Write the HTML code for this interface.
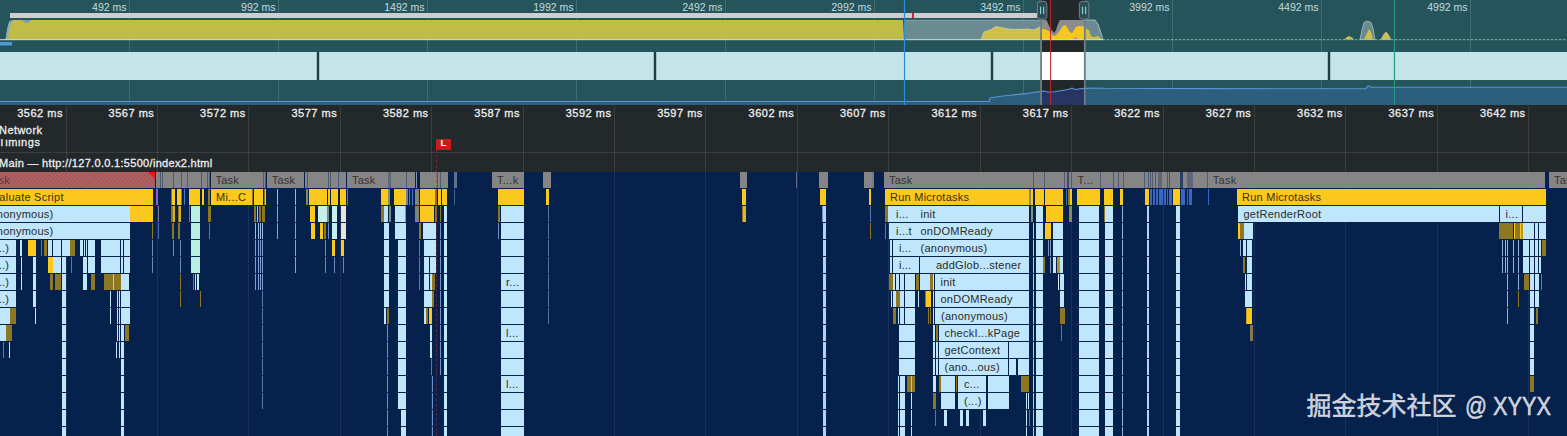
<!DOCTYPE html>
<html><head><meta charset="utf-8"><title>Performance</title>
<style>
html,body{margin:0;padding:0;background:#23282a;}
body{width:1567px;height:436px;position:relative;overflow:hidden;font-family:"Liberation Sans","Noto Sans CJK SC",sans-serif;font-size:11px;}
#ovw{position:absolute;left:0;top:0;width:1567px;height:105px;background:#25545b;overflow:hidden;}
.ov{position:absolute;left:0;top:0;}
.ol{position:absolute;top:1px;width:60px;text-align:right;color:#c4dcdf;font-size:10.5px;line-height:13px;white-space:nowrap;}
#mid{position:absolute;left:0;top:105px;width:1567px;height:67px;background:#23282a;}
.rl{position:absolute;top:107px;width:70px;text-align:right;color:#eceeef;font-size:11px;line-height:13px;white-space:nowrap;letter-spacing:0.5px;-webkit-text-stroke:0.3px #eceeef;}
.g{position:absolute;top:106px;width:1px;height:330px;background:linear-gradient(to bottom,rgba(255,255,255,0.10) 0 66px,rgba(200,215,255,0.09) 66px 330px);}
.tl{position:absolute;left:0;color:#eceeef;font-size:11px;line-height:13px;white-space:nowrap;letter-spacing:0.25px;-webkit-text-stroke:0.3px #eceeef;}
#flame{position:absolute;left:0;top:172px;width:1567px;height:264px;background:#07214d;}
.b{position:absolute;height:16px;overflow:hidden;}
.b span{position:absolute;top:1px;line-height:14px;font-size:11px;white-space:nowrap;letter-spacing:0.25px;}
#wm{position:absolute;left:1306.5px;top:389px;font-size:25px;line-height:34px;color:rgba(235,238,242,0.86);white-space:nowrap;-webkit-text-stroke:0.45px rgba(235,238,242,0.86);}
#wm2{position:absolute;left:1465px;top:388.5px;font-size:25px;line-height:34px;color:rgba(235,238,242,0.86);white-space:nowrap;transform:scaleX(0.868);transform-origin:0 0;-webkit-text-stroke:0.5px rgba(235,238,242,0.86);}
</style></head><body>
<div id="ovw"><svg class="ov" width="1567" height="105" viewBox="0 0 1567 105"><line x1="129.5" y1="0" x2="129.5" y2="103" stroke="#3f6d74" stroke-width="1"/><line x1="278.5" y1="0" x2="278.5" y2="103" stroke="#3f6d74" stroke-width="1"/><line x1="427.5" y1="0" x2="427.5" y2="103" stroke="#3f6d74" stroke-width="1"/><line x1="576.5" y1="0" x2="576.5" y2="103" stroke="#3f6d74" stroke-width="1"/><line x1="725.5" y1="0" x2="725.5" y2="103" stroke="#3f6d74" stroke-width="1"/><line x1="874.5" y1="0" x2="874.5" y2="103" stroke="#3f6d74" stroke-width="1"/><line x1="1023.5" y1="0" x2="1023.5" y2="103" stroke="#3f6d74" stroke-width="1"/><line x1="1172.5" y1="0" x2="1172.5" y2="103" stroke="#3f6d74" stroke-width="1"/><line x1="1321.5" y1="0" x2="1321.5" y2="103" stroke="#3f6d74" stroke-width="1"/><line x1="1470.5" y1="0" x2="1470.5" y2="103" stroke="#3f6d74" stroke-width="1"/><line x1="1619.5" y1="0" x2="1619.5" y2="103" stroke="#3f6d74" stroke-width="1"/><rect x="10" y="13" width="1027" height="5" fill="#cfcdd2"/><rect x="912" y="13" width="2" height="5" fill="#d6242c"/><path d="M3,39.5 L5.5,39 L7,30 L9,22 L11,20.5 L14,20 L903,20 L904,39.5 Z" fill="#c1bc48"/><path d="M6,39 L7.5,28 L9.5,21.5 L14,20 L11,23 L9,30 L8,39 Z" fill="#7fb0c8"/><path d="M22,20 L24,22 L27,23 L30,21 L31,20 Z" fill="#6f9fb6"/><rect x="905" y="20" width="136" height="19.5" fill="#6a8b90"/><path d="M905,20.3 L1041,20.3" stroke="#8fa9ad" stroke-width="0.8"/><path d="M981,39.5 L984,32 L990,30 L996,26.5 L1000,27.5 L1008,29 L1018,29.5 L1028,29 L1034,30 L1041,26.5 L1041,39.5 Z" fill="#cdc044"/><path d="M981,39.5 L984,32 L990,30 L996,26.5 L1000,27.5 L1008,29 L1018,29.5 L1028,29 L1034,30 L1041,26.5" fill="none" stroke="#d9d9c0" stroke-width="0.7"/><rect x="1042" y="0" width="43" height="105" fill="#222829"/><path d="M1042,20 L1046.5,20 L1049.6,27 L1052,30.5 L1054.3,33 L1056,30 L1057.5,25.5 L1059.4,20.6 L1061,20 L1085,20 L1085,39.5 L1042,39.5 Z" fill="#8c8c8c"/><path d="M1042,29 L1045,29.5 L1049,31 L1053,35.5 L1055,36 L1058,33 L1061,29 L1063,26 L1065,25 L1067,27 L1069,31 L1072,33.5 L1074,30 L1076,27 L1079,26 L1085,26.5 L1085,39.5 L1042,39.5 Z" fill="#f6c71c"/><path d="M1073,39.5 L1075.5,37 L1078,39.5 Z" fill="#c070e0"/><path d="M1085,20 L1095,20 L1098,24 L1100,30 L1103,39.5 L1085,39.5 Z" fill="#6a8b90"/><path d="M1085,20 L1095,20 L1098,24 L1100,30 L1103,39.5" fill="none" stroke="#b8c8ca" stroke-width="0.8"/><path d="M1085,28 L1089,30 L1091,36 L1094,37 L1098,36 L1102,39.5 L1085,39.5 Z" fill="#cdc044"/><path d="M1344,39.5 L1347,37 L1349,36 L1352,37.5 L1354,39.5 Z" fill="#cdc044"/><path d="M1360,39.5 L1362,30 L1364,22.5 L1367,21 L1371,22.5 L1373,28 L1375,39.5 Z" fill="#6a8b90" stroke="#b8c8ca" stroke-width="0.7"/><path d="M1364,39.5 L1367,33 L1369,29 L1371,32 L1373,39.5 Z" fill="#cdc044"/><path d="M1381,39.5 L1384,34 L1386,32 L1388,34 L1391,39.5 Z" fill="#cdc044" stroke="#b8c8ca" stroke-width="0.6"/><path d="M0,39.7 L1103,39.7" stroke="#e6ecec" stroke-width="0.9"/><path d="M1103,39.7 L1567,39.7" stroke="#b4c6c8" stroke-width="0.8" stroke-dasharray="2.5 1.5"/><rect x="0" y="42" width="12" height="3.5" fill="#4b9ad6"/><rect x="0" y="52" width="1567" height="28" fill="#c5e4e9"/><rect x="316.8" y="52" width="2.4" height="28" fill="#1f3d42"/><rect x="653.8" y="52" width="2.4" height="28" fill="#1f3d42"/><rect x="990.8" y="52" width="2.4" height="28" fill="#1f3d42"/><rect x="1327.8" y="52" width="2.4" height="28" fill="#1f3d42"/><rect x="1042" y="52" width="43" height="28" fill="#ffffff"/><path d="M0,101.5 L989,101.5 L990,98 L996,97 L1003,96 L1010,95.2 L1018,94.4 L1026,93.6 L1034,92.5 L1040,91.6 L1044,91 L1048,92 L1055,91.8 L1062,90.5 L1068,89.5 L1072,88 L1075,89.5 L1078,89 L1082,88.6 L1086,88.4 L1095,88 L1105,88.3 L1200,88.6 L1366,88.8 L1367,86.5 L1369,85.8 L1371,87.2 L1567,87.2 L1567,105 L0,105 Z" fill="#2d5e7b"/><path d="M1042,91.3 L1044,91 L1048,92 L1055,91.8 L1062,90.5 L1068,89.5 L1072,88 L1075,89.5 L1078,89 L1082,88.6 L1085,88.4 L1085,105 L1042,105 Z" fill="#2a3462"/><path d="M0,101.5 L989,101.5 L990,98 L996,97 L1003,96 L1010,95.2 L1018,94.4 L1026,93.6 L1034,92.5 L1040,91.6 L1044,91 L1048,92 L1055,91.8 L1062,90.5 L1068,89.5 L1072,88 L1075,89.5 L1078,89 L1082,88.6 L1086,88.4 L1095,88 L1105,88.3 L1200,88.6 L1366,88.8 L1367,86.5 L1369,85.8 L1371,87.2 L1567,87.2" fill="none" stroke="#5796d6" stroke-width="1.1"/><line x1="904.5" y1="0" x2="904.5" y2="105" stroke="#2a8ee0" stroke-width="1.2"/><line x1="1394.5" y1="0" x2="1394.5" y2="105" stroke="#1f9b80" stroke-width="1.2"/><line x1="1050.6" y1="0" x2="1050.6" y2="105" stroke="#c8222a" stroke-width="1"/><rect x="1040.2" y="19" width="1.8" height="86" fill="#6c7e83"/><rect x="1083.9" y="19" width="1.8" height="86" fill="#6c7e83"/><rect x="1037.4" y="1.4" width="9.4" height="17.8" rx="2.8" fill="#2f4c54" stroke="#748c90" stroke-width="0.9"/><rect x="1040" y="6.7" width="1.1" height="7.4" fill="#86d8dc"/><rect x="1043.1" y="6.7" width="1.1" height="7.4" fill="#86d8dc"/><rect x="1079.4" y="1.4" width="9.4" height="17.8" rx="2.8" fill="#2f4c54" stroke="#748c90" stroke-width="0.9"/><rect x="1082" y="6.7" width="1.1" height="7.4" fill="#86d8dc"/><rect x="1085.1" y="6.7" width="1.1" height="7.4" fill="#86d8dc"/></svg><div class="ol" style="left:66.5px">492 ms</div><div class="ol" style="left:215.5px">992 ms</div><div class="ol" style="left:364.5px">1492 ms</div><div class="ol" style="left:513.5px">1992 ms</div><div class="ol" style="left:662.5px">2492 ms</div><div class="ol" style="left:811.5px">2992 ms</div><div class="ol" style="left:960.5px">3492 ms</div><div class="ol" style="left:1109.5px">3992 ms</div><div class="ol" style="left:1258.5px">4492 ms</div><div class="ol" style="left:1407.5px">4992 ms</div></div>
<div id="mid"></div>
<div id="flame"></div>
<div class="rl" style="left:-7.1px">3562 ms</div><div class="rl" style="left:84.32px">3567 ms</div><div class="rl" style="left:175.74px">3572 ms</div><div class="rl" style="left:267.16px">3577 ms</div><div class="rl" style="left:358.58px">3582 ms</div><div class="rl" style="left:450px">3587 ms</div><div class="rl" style="left:541.42px">3592 ms</div><div class="rl" style="left:632.84px">3597 ms</div><div class="rl" style="left:724.26px">3602 ms</div><div class="rl" style="left:815.68px">3607 ms</div><div class="rl" style="left:907.1px">3612 ms</div><div class="rl" style="left:998.52px">3617 ms</div><div class="rl" style="left:1089.94px">3622 ms</div><div class="rl" style="left:1181.36px">3627 ms</div><div class="rl" style="left:1272.78px">3632 ms</div><div class="rl" style="left:1364.2px">3637 ms</div><div class="rl" style="left:1455.62px">3642 ms</div>
<div class="tl" style="top:124px;left:-1px;letter-spacing:0.45px">Network</div>
<div class="tl" style="top:139.4px;left:-1.5px;height:10px;overflow:hidden;letter-spacing:0.55px"><span style="position:relative;top:-3.6px">Timings</span></div>
<div style="position:absolute;left:0;top:152px;width:1567px;height:1px;background:rgba(255,255,255,0.10)"></div>
<div class="tl" style="top:157.4px;left:-1px;letter-spacing:0.31px">Main — http://127.0.0.1:5500/index2.html</div>
<div class="g" style="left:66px"></div><div class="g" style="left:157px"></div><div class="g" style="left:248px"></div><div class="g" style="left:340px"></div><div class="g" style="left:431px"></div><div class="g" style="left:523px"></div><div class="g" style="left:614px"></div><div class="g" style="left:705px"></div><div class="g" style="left:797px"></div><div class="g" style="left:888px"></div><div class="g" style="left:980px"></div><div class="g" style="left:1071px"></div><div class="g" style="left:1163px"></div><div class="g" style="left:1254px"></div><div class="g" style="left:1345px"></div><div class="g" style="left:1437px"></div><div class="g" style="left:1528px"></div>
<div class="b" style="left:0;top:172px;width:155px;background:repeating-linear-gradient(135deg,#b84d52 0 1.4px,#9b6e6e 1.4px 2.8px);"><span style="left:-13.5px;color:#65343a">Task</span></div>
<div style="position:absolute;left:148px;top:172px;width:0;height:0;border-left:7px solid transparent;border-top:7px solid #f0101a"></div>
<div class="b" style="left:156px;top:172px;width:54.3px;background:#858585;"></div>
<div class="b" style="left:159.7px;top:172px;width:1.1px;background:#4f5a74;"></div>
<div class="b" style="left:162.3px;top:172px;width:1.1px;background:#4f5a74;"></div>
<div class="b" style="left:173.4px;top:172px;width:1.1px;background:#4f5a74;"></div>
<div class="b" style="left:180.9px;top:172px;width:1.1px;background:#4f5a74;"></div>
<div class="b" style="left:186.8px;top:172px;width:1.1px;background:#4f5a74;"></div>
<div class="b" style="left:200.7px;top:172px;width:1.1px;background:#4f5a74;"></div>
<div class="b" style="left:207px;top:172px;width:1.1px;background:#4f5a74;"></div>
<div class="b" style="left:209.1px;top:172px;width:1.1px;background:#4f5a74;"></div>
<div class="b" style="left:253.3px;top:172px;width:12.7px;background:#858585;"></div>
<div class="b" style="left:262.5px;top:172px;width:1.1px;background:#4f5a74;"></div>
<div class="b" style="left:265.2px;top:172px;width:1.1px;background:#4f5a74;"></div>
<div class="b" style="left:305.2px;top:172px;width:40.8px;background:#858585;"></div>
<div class="b" style="left:307.3px;top:172px;width:1.1px;background:#4f5a74;"></div>
<div class="b" style="left:327.8px;top:172px;width:1.1px;background:#4f5a74;"></div>
<div class="b" style="left:330.2px;top:172px;width:1.1px;background:#4f5a74;"></div>
<div class="b" style="left:337.5px;top:172px;width:1.1px;background:#4f5a74;"></div>
<div class="b" style="left:388px;top:172px;width:26.8px;background:#858585;"></div>
<div class="b" style="left:388.7px;top:172px;width:1.1px;background:#4f5a74;"></div>
<div class="b" style="left:406px;top:172px;width:1.1px;background:#4f5a74;"></div>
<div class="b" style="left:388px;top:172px;width:2.5px;background:#5f687a;"></div>
<div class="b" style="left:416px;top:172px;width:1px;background:#7f93b0;"></div>
<div class="b" style="left:419.8px;top:172px;width:28px;background:#858585;"></div>
<div class="b" style="left:436.5px;top:172px;width:1.1px;background:#4f5a74;"></div>
<div class="b" style="left:440.1px;top:172px;width:1.1px;background:#4f5a74;"></div>
<div class="b" style="left:543px;top:172px;width:8px;background:#858585;"></div>
<div class="b" style="left:740px;top:172px;width:7px;background:#858585;"></div>
<div class="b" style="left:819px;top:172px;width:9px;background:#858585;"></div>
<div class="b" style="left:864px;top:172px;width:8px;background:#858585;"></div>
<div class="b" style="left:1029.5px;top:172px;width:43px;background:#858585;"></div>
<div class="b" style="left:1029.1px;top:172px;width:1.1px;background:#4f5a74;"></div>
<div class="b" style="left:1033.1px;top:172px;width:1.1px;background:#4f5a74;"></div>
<div class="b" style="left:1043.8px;top:172px;width:1.1px;background:#4f5a74;"></div>
<div class="b" style="left:1063.8px;top:172px;width:1.1px;background:#4f5a74;"></div>
<div class="b" style="left:1071.4px;top:172px;width:1.1px;background:#4f5a74;"></div>
<div class="b" style="left:1067.3px;top:172px;width:2px;background:#3d4a68;"></div>
<div class="b" style="left:1100px;top:172px;width:107.4px;background:#858585;"></div>
<div class="b" style="left:1099.7px;top:172px;width:1.1px;background:#4f5a74;"></div>
<div class="b" style="left:1112.8px;top:172px;width:1.1px;background:#4f5a74;"></div>
<div class="b" style="left:1118.1px;top:172px;width:1.1px;background:#4f5a74;"></div>
<div class="b" style="left:1123.1px;top:172px;width:1.1px;background:#4f5a74;"></div>
<div class="b" style="left:1144.1px;top:172px;width:1.1px;background:#4f5a74;"></div>
<div class="b" style="left:1147.5px;top:172px;width:1.1px;background:#4f5a74;"></div>
<div class="b" style="left:1149.5px;top:172px;width:1.1px;background:#4f5a74;"></div>
<div class="b" style="left:1151.5px;top:172px;width:1.1px;background:#4f5a74;"></div>
<div class="b" style="left:1155.1px;top:172px;width:1.1px;background:#4f5a74;"></div>
<div class="b" style="left:1166.8px;top:172px;width:1.1px;background:#4f5a74;"></div>
<div class="b" style="left:1206.8px;top:172px;width:1.1px;background:#4f5a74;"></div>
<div class="b" style="left:1158.3px;top:172px;width:4.2px;background:#5e6679;"></div>
<div class="b" style="left:1169.3px;top:172px;width:1.1px;background:#3b5696;"></div>
<div class="b" style="left:1179.6px;top:172px;width:3.8px;background:#2c3f6a;"></div>
<div class="b" style="left:1187.2px;top:172px;width:5.5px;background:#5e6679;"></div>
<div class="b" style="left:454px;top:172px;width:2.6px;background:#5d7090;"></div>
<div class="b" style="left:872px;top:172px;width:2px;background:#767b86;"></div>
<div class="b" style="left:796px;top:172px;width:1px;background:#5d6a80;"></div>
<div class="b" style="left:210.5px;top:172px;width:42px;background:#858585;"><span style="left:5px;color:#333">Task</span></div>
<div class="b" style="left:266.7px;top:172px;width:37.7px;background:#858585;"><span style="left:5px;color:#333">Task</span></div>
<div class="b" style="left:347px;top:172px;width:41px;background:#858585;"><span style="left:5px;color:#333">Task</span></div>
<div class="b" style="left:492px;top:172px;width:32px;background:#858585;"><span style="left:5px;color:#333">T...k</span></div>
<div class="b" style="left:884px;top:172px;width:145.5px;background:#858585;"><span style="left:5px;color:#333">Task</span></div>
<div class="b" style="left:1072.5px;top:172px;width:27.5px;background:#858585;"><span style="left:5px;color:#333">T...</span></div>
<div class="b" style="left:1207.8px;top:172px;width:337.2px;background:#858585;"><span style="left:5px;color:#333">Task</span></div>
<div class="b" style="left:1549px;top:172px;width:18px;background:#858585;"><span style="left:5px;color:#333">Task</span></div>
<div class="b" style="left:0px;top:189px;width:153px;background:#fbc91d;"><span style="left:-14px;color:#3a2f00">Evaluate Script</span></div>
<div class="b" style="left:156px;top:189px;width:2px;background:#8a63d2;"></div>
<div class="b" style="left:172px;top:189px;width:2.6px;background:#fbc91d;"></div>
<div class="b" style="left:177px;top:189px;width:4.3px;background:#fbc91d;"></div>
<div class="b" style="left:188.8px;top:189px;width:11.2px;background:#fbc91d;"></div>
<div class="b" style="left:253.9px;top:189px;width:8.7px;background:#fbc91d;"></div>
<div class="b" style="left:309px;top:189px;width:17.6px;background:#fbc91d;"></div>
<div class="b" style="left:328.3px;top:189px;width:1.7px;background:#fbc91d;"></div>
<div class="b" style="left:331px;top:189px;width:6.6px;background:#fbc91d;"></div>
<div class="b" style="left:340.4px;top:189px;width:5.2px;background:#fbc91d;"></div>
<div class="b" style="left:381px;top:189px;width:7.4px;background:#fbc91d;"></div>
<div class="b" style="left:394px;top:189px;width:12px;background:#fbc91d;"></div>
<div class="b" style="left:419.8px;top:189px;width:15.4px;background:#fbc91d;"></div>
<div class="b" style="left:438px;top:189px;width:2.5px;background:#fbc91d;"></div>
<div class="b" style="left:442.4px;top:189px;width:4.9px;background:#fbc91d;"></div>
<div class="b" style="left:498px;top:189px;width:26px;background:#fbc91d;"></div>
<div class="b" style="left:546px;top:189px;width:3px;background:#fbc91d;"></div>
<div class="b" style="left:742px;top:189px;width:4px;background:#fbc91d;"></div>
<div class="b" style="left:820px;top:189px;width:6px;background:#fbc91d;"></div>
<div class="b" style="left:869px;top:189px;width:2px;background:#fbc91d;"></div>
<div class="b" style="left:1035px;top:189px;width:8.6px;background:#fbc91d;"></div>
<div class="b" style="left:1045.2px;top:189px;width:18.3px;background:#fbc91d;"></div>
<div class="b" style="left:1070px;top:189px;width:1.6px;background:#fbc91d;"></div>
<div class="b" style="left:1077px;top:189px;width:23px;background:#fbc91d;"></div>
<div class="b" style="left:1103.7px;top:189px;width:9.1px;background:#fbc91d;"></div>
<div class="b" style="left:1119.8px;top:189px;width:3px;background:#fbc91d;"></div>
<div class="b" style="left:1145px;top:189px;width:3.7px;background:#fbc91d;"></div>
<div class="b" style="left:1172.8px;top:189px;width:7.2px;background:#fbc91d;"></div>
<div class="b" style="left:171px;top:189px;width:1px;background:#8d7722;"></div>
<div class="b" style="left:181.3px;top:189px;width:0.7px;background:#8d7722;"></div>
<div class="b" style="left:184px;top:189px;width:1px;background:#4d78c8;"></div>
<div class="b" style="left:201.8px;top:189px;width:2.2px;background:#fbc91d;"></div>
<div class="b" style="left:208.2px;top:189px;width:2.3px;background:#8d7722;"></div>
<div class="b" style="left:264px;top:189px;width:1px;background:#8d7722;"></div>
<div class="b" style="left:265px;top:189px;width:1px;background:#fbc91d;"></div>
<div class="b" style="left:210.5px;top:189px;width:41.5px;background:#fbc91d;"><span style="left:5.5px;color:#3a2f00">Mi...C</span></div>
<div class="b" style="left:252px;top:189px;width:1px;background:#8d7722;"></div>
<div class="b" style="left:277px;top:189px;width:1px;background:#9db4e0;"></div>
<div class="b" style="left:295.2px;top:189px;width:1px;background:#9db4e0;"></div>
<div class="b" style="left:305.7px;top:189px;width:2.8px;background:#87885e;"></div>
<div class="b" style="left:347px;top:189px;width:1px;background:#8d7722;"></div>
<div class="b" style="left:388.4px;top:189px;width:2.1px;background:#87886c;"></div>
<div class="b" style="left:406px;top:189px;width:2px;background:#6f7f98;"></div>
<div class="b" style="left:409px;top:189px;width:1px;background:#4d78c8;"></div>
<div class="b" style="left:411.5px;top:189px;width:1px;background:#4d78c8;"></div>
<div class="b" style="left:415.4px;top:189px;width:3.6px;background:#7c8478;"></div>
<div class="b" style="left:435.2px;top:189px;width:1.8px;background:#8d7722;"></div>
<div class="b" style="left:885px;top:189px;width:143.5px;background:#fbc91d;"><span style="left:5px;color:#3a2f00">Run Microtasks</span></div>
<div class="b" style="left:1028.5px;top:189px;width:2.1px;background:#8d8a5a;"></div>
<div class="b" style="left:1030.8px;top:189px;width:2.7px;background:#fbc91d;"></div>
<div class="b" style="left:1068.3px;top:189px;width:1.7px;background:#8d7722;"></div>
<div class="b" style="left:1237px;top:189px;width:309px;background:#fbc91d;"><span style="left:5px;color:#3a2f00">Run Microtasks</span></div>
<div class="b" style="left:1150px;top:189px;width:2.1px;background:#3868c4;"></div>
<div class="b" style="left:1152.8px;top:189px;width:2.2px;background:#3868c4;"></div>
<div class="b" style="left:1156px;top:189px;width:2px;background:#3868c4;"></div>
<div class="b" style="left:1159px;top:189px;width:4.1px;background:#3868c4;"></div>
<div class="b" style="left:1163.8px;top:189px;width:1.8px;background:#3868c4;"></div>
<div class="b" style="left:1166.6px;top:189px;width:1.4px;background:#3868c4;"></div>
<div class="b" style="left:1168.6px;top:189px;width:3px;background:#3868c4;"></div>
<div class="b" style="left:1181px;top:189px;width:4.2px;background:#3868c4;"></div>
<div class="b" style="left:1186.5px;top:189px;width:1.5px;background:#3868c4;"></div>
<div class="b" style="left:1188.6px;top:189px;width:3.4px;background:#3868c4;"></div>
<div class="b" style="left:1208px;top:189px;width:1px;background:#3868c4;"></div>
<div class="b" style="left:1066px;top:189px;width:1px;background:#3868c4;"></div>
<div class="b" style="left:0px;top:206px;width:129.5px;background:#bfe6fa;"><span style="left:-13.5px;color:#2b2b2b">(anonymous)</span></div>
<div class="b" style="left:130px;top:206px;width:23px;background:#fbc91d;"></div>
<div class="b" style="left:0px;top:223px;width:129.5px;background:#bfe6fa;"><span style="left:-13.5px;color:#2b2b2b">(anonymous)</span></div>
<div class="b" style="left:152px;top:223px;width:1px;background:#8d7722;"></div>
<div class="b" style="left:0px;top:240px;width:15.5px;background:#bfe6fa;"><span style="left:-8.5px;color:#2b2b2b">(...)</span></div>
<div class="b" style="left:0px;top:257px;width:15.5px;background:#bfe6fa;"><span style="left:-8.5px;color:#2b2b2b">(...)</span></div>
<div class="b" style="left:0px;top:274px;width:15.5px;background:#bfe6fa;"><span style="left:-8.5px;color:#2b2b2b">(...)</span></div>
<div class="b" style="left:0px;top:291px;width:15.5px;background:#bfe6fa;"><span style="left:-8.5px;color:#2b2b2b">(...)</span></div>
<div class="b" style="left:0px;top:308px;width:10px;background:#bfe6fa;"></div>
<div class="b" style="left:10px;top:308px;width:5.5px;background:#8d7722;"></div>
<div class="b" style="left:0px;top:325px;width:5.5px;background:#bfe6fa;"></div>
<div class="b" style="left:5.5px;top:325px;width:6px;background:#8d7722;"></div>
<div class="b" style="left:3px;top:342px;width:1px;background:#8d7722;"></div>
<div class="b" style="left:9px;top:342px;width:1px;background:#bfe6fa;"></div>
<div class="b" style="left:20px;top:240px;width:2px;background:#bfe6fa;"></div>
<div class="b" style="left:28px;top:240px;width:7.5px;background:#fbc91d;"></div>
<div class="b" style="left:40.5px;top:240px;width:1.5px;background:#8d7722;"></div>
<div class="b" style="left:44px;top:240px;width:2.5px;background:#8d7722;"></div>
<div class="b" style="left:48px;top:240px;width:4px;background:#bfe6fa;"></div>
<div class="b" style="left:52.8px;top:240px;width:8.2px;background:#bfe6fa;"></div>
<div class="b" style="left:61.6px;top:240px;width:4.2px;background:#bfe6fa;"></div>
<div class="b" style="left:66.4px;top:240px;width:3.6px;background:#bfe6fa;"></div>
<div class="b" style="left:70px;top:240px;width:4.7px;background:#8d7722;"></div>
<div class="b" style="left:80.3px;top:240px;width:2.7px;background:#bfe6fa;"></div>
<div class="b" style="left:83.6px;top:240px;width:1.4px;background:#bfe6fa;"></div>
<div class="b" style="left:85.6px;top:240px;width:1.4px;background:#bfe6fa;"></div>
<div class="b" style="left:87.6px;top:240px;width:7.9px;background:#bfe6fa;"></div>
<div class="b" style="left:101px;top:240px;width:19px;background:#bfe6fa;"></div>
<div class="b" style="left:120.6px;top:240px;width:2.8px;background:#bfe6fa;"></div>
<div class="b" style="left:124px;top:240px;width:5.5px;background:#bfe6fa;"></div>
<div class="b" style="left:20.7px;top:257px;width:1.3px;background:#bfe6fa;"></div>
<div class="b" style="left:33px;top:257px;width:2.5px;background:#bfe6fa;"></div>
<div class="b" style="left:48px;top:257px;width:4.5px;background:#fbc91d;"></div>
<div class="b" style="left:52.5px;top:257px;width:8.5px;background:#bfe6fa;"></div>
<div class="b" style="left:61.6px;top:257px;width:4.2px;background:#bfe6fa;"></div>
<div class="b" style="left:70.6px;top:257px;width:1px;background:#8d7722;"></div>
<div class="b" style="left:83.3px;top:257px;width:3.7px;background:#bfe6fa;"></div>
<div class="b" style="left:87.6px;top:257px;width:7.9px;background:#bfe6fa;"></div>
<div class="b" style="left:101px;top:257px;width:19px;background:#bfe6fa;"></div>
<div class="b" style="left:120.6px;top:257px;width:2.8px;background:#bfe6fa;"></div>
<div class="b" style="left:124px;top:257px;width:5.5px;background:#bfe6fa;"></div>
<div class="b" style="left:20.7px;top:274px;width:1.3px;background:#bfe6fa;"></div>
<div class="b" style="left:33px;top:274px;width:2.5px;background:#bfe6fa;"></div>
<div class="b" style="left:50px;top:274px;width:3px;background:#8d7722;"></div>
<div class="b" style="left:54.8px;top:274px;width:6.6px;background:#8d7722;"></div>
<div class="b" style="left:61.6px;top:274px;width:4.2px;background:#bfe6fa;"></div>
<div class="b" style="left:83.3px;top:274px;width:3.7px;background:#bfe6fa;"></div>
<div class="b" style="left:91.4px;top:274px;width:4.1px;background:#8d7722;"></div>
<div class="b" style="left:104px;top:274px;width:9px;background:#8d7722;"></div>
<div class="b" style="left:113px;top:274px;width:1px;background:#fbc91d;"></div>
<div class="b" style="left:114px;top:274px;width:6.6px;background:#8d7722;"></div>
<div class="b" style="left:120.8px;top:274px;width:8.7px;background:#bfe6fa;"></div>
<div class="b" style="left:33px;top:291px;width:2.5px;background:#bfe6fa;"></div>
<div class="b" style="left:61.6px;top:291px;width:4.2px;background:#bfe6fa;"></div>
<div class="b" style="left:110px;top:291px;width:1px;background:#bfe6fa;"></div>
<div class="b" style="left:117px;top:291px;width:1px;background:#bfe6fa;"></div>
<div class="b" style="left:119px;top:291px;width:1px;background:#bfe6fa;"></div>
<div class="b" style="left:121px;top:291px;width:8.5px;background:#bfe6fa;"></div>
<div class="b" style="left:35px;top:308px;width:1px;background:#bfe6fa;"></div>
<div class="b" style="left:109.5px;top:308px;width:1px;background:#bfe6fa;"></div>
<div class="b" style="left:117px;top:308px;width:1px;background:#bfe6fa;"></div>
<div class="b" style="left:119px;top:308px;width:1px;background:#bfe6fa;"></div>
<div class="b" style="left:121px;top:308px;width:8.5px;background:#bfe6fa;"></div>
<div class="b" style="left:117px;top:325px;width:1px;background:#bfe6fa;"></div>
<div class="b" style="left:119px;top:325px;width:1px;background:#bfe6fa;"></div>
<div class="b" style="left:121px;top:325px;width:3px;background:#bfe6fa;"></div>
<div class="b" style="left:124.7px;top:325px;width:4.1px;background:#8d7722;"></div>
<div class="b" style="left:116px;top:342px;width:1px;background:#bfe6fa;"></div>
<div class="b" style="left:119px;top:342px;width:1px;background:#bfe6fa;"></div>
<div class="b" style="left:62px;top:308px;width:3.8px;background:#bfe6fa;"></div>
<div class="b" style="left:62px;top:325px;width:3.8px;background:#bfe6fa;"></div>
<div class="b" style="left:62px;top:342px;width:3.8px;background:#bfe6fa;"></div>
<div class="b" style="left:62px;top:359px;width:3.8px;background:#bfe6fa;"></div>
<div class="b" style="left:62px;top:376px;width:3.8px;background:#bfe6fa;"></div>
<div class="b" style="left:62px;top:393px;width:3.8px;background:#bfe6fa;"></div>
<div class="b" style="left:62px;top:410px;width:3.8px;background:#bfe6fa;"></div>
<div class="b" style="left:62px;top:427px;width:3.8px;background:#bfe6fa;"></div>
<div class="b" style="left:121px;top:342px;width:3px;background:#bfe6fa;"></div>
<div class="b" style="left:121px;top:359px;width:3px;background:#bfe6fa;"></div>
<div class="b" style="left:121px;top:376px;width:3px;background:#bfe6fa;"></div>
<div class="b" style="left:121px;top:393px;width:3px;background:#bfe6fa;"></div>
<div class="b" style="left:121px;top:410px;width:3px;background:#bfe6fa;"></div>
<div class="b" style="left:121px;top:427px;width:3px;background:#bfe6fa;"></div>
<div class="b" style="left:158px;top:206px;width:1px;background:#6f7f98;"></div>
<div class="b" style="left:158px;top:223px;width:1px;background:#4d6aa8;"></div>
<div class="b" style="left:171px;top:206px;width:1.5px;background:#8d7722;"></div>
<div class="b" style="left:172.5px;top:206px;width:2.7px;background:#d9b01e;"></div>
<div class="b" style="left:177.5px;top:206px;width:1.5px;background:#8d7722;"></div>
<div class="b" style="left:179px;top:206px;width:2.3px;background:#d9b01e;"></div>
<div class="b" style="left:151.5px;top:223px;width:1.5px;background:#8d7722;"></div>
<div class="b" style="left:171.5px;top:223px;width:2px;background:#8d7722;"></div>
<div class="b" style="left:178.4px;top:223px;width:2.1px;background:#8d7722;"></div>
<div class="b" style="left:152.2px;top:240px;width:0.8px;background:#6d86c0;"></div>
<div class="b" style="left:152.2px;top:257px;width:0.8px;background:#6d86c0;"></div>
<div class="b" style="left:173.2px;top:240px;width:0.8px;background:#6d86c0;"></div>
<div class="b" style="left:179.6px;top:240px;width:0.8px;background:#6d86c0;"></div>
<div class="b" style="left:179.6px;top:257px;width:0.8px;background:#6d86c0;"></div>
<div class="b" style="left:179.6px;top:274px;width:0.8px;background:#8d7722;"></div>
<div class="b" style="left:179.6px;top:291px;width:0.8px;background:#8d7722;"></div>
<div class="b" style="left:200px;top:291px;width:0.8px;background:#8d7722;"></div>
<div class="b" style="left:190.5px;top:206px;width:9px;background:#b9efe0;"></div>
<div class="b" style="left:190.5px;top:223px;width:9px;background:#b9efe0;"></div>
<div class="b" style="left:190.5px;top:240px;width:9px;background:#b9efe0;"></div>
<div class="b" style="left:190.5px;top:257px;width:9px;background:#b9efe0;"></div>
<div class="b" style="left:189.4px;top:206px;width:1.1px;background:#8d7722;"></div>
<div class="b" style="left:193.3px;top:274px;width:1.2px;background:#8d7722;"></div>
<div class="b" style="left:194.5px;top:274px;width:1.7px;background:#b9efe0;"></div>
<div class="b" style="left:196.8px;top:274px;width:2.6px;background:#b9efe0;"></div>
<div class="b" style="left:208.2px;top:206px;width:2.4px;background:#8d7722;"></div>
<div class="b" style="left:208.6px;top:223px;width:1px;background:#8d7722;"></div>
<div class="b" style="left:254px;top:206px;width:1.6px;background:#8d7722;"></div>
<div class="b" style="left:256.5px;top:206px;width:1.6px;background:#fbc91d;"></div>
<div class="b" style="left:259px;top:206px;width:1.6px;background:#8d7722;"></div>
<div class="b" style="left:261.5px;top:206px;width:1.6px;background:#8d7722;"></div>
<div class="b" style="left:263.4px;top:206px;width:1.9px;background:#8d7722;"></div>
<div class="b" style="left:255.4px;top:223px;width:1px;background:#9cc0ea;"></div>
<div class="b" style="left:257.5px;top:223px;width:1px;background:#9cc0ea;"></div>
<div class="b" style="left:259.6px;top:223px;width:1px;background:#9cc0ea;"></div>
<div class="b" style="left:262px;top:223px;width:1px;background:#9cc0ea;"></div>
<div class="b" style="left:255.4px;top:240px;width:1px;background:#7f9fd4;"></div>
<div class="b" style="left:257.5px;top:240px;width:1px;background:#7f9fd4;"></div>
<div class="b" style="left:259.6px;top:240px;width:1px;background:#7f9fd4;"></div>
<div class="b" style="left:262px;top:240px;width:1px;background:#7f9fd4;"></div>
<div class="b" style="left:255.4px;top:257px;width:1px;background:#7f9fd4;"></div>
<div class="b" style="left:257.5px;top:257px;width:1px;background:#7f9fd4;"></div>
<div class="b" style="left:259.6px;top:257px;width:1px;background:#7f9fd4;"></div>
<div class="b" style="left:262px;top:257px;width:1px;background:#7f9fd4;"></div>
<div class="b" style="left:255.4px;top:274px;width:1px;background:#7f9fd4;"></div>
<div class="b" style="left:257.5px;top:274px;width:1px;background:#7f9fd4;"></div>
<div class="b" style="left:259.6px;top:274px;width:1px;background:#7f9fd4;"></div>
<div class="b" style="left:262px;top:274px;width:1px;background:#7f9fd4;"></div>
<div class="b" style="left:262.3px;top:291px;width:1px;background:#5878b0;"></div>
<div class="b" style="left:262.3px;top:308px;width:1px;background:#5878b0;"></div>
<div class="b" style="left:262.3px;top:325px;width:1px;background:#5878b0;"></div>
<div class="b" style="left:262.3px;top:342px;width:1px;background:#5878b0;"></div>
<div class="b" style="left:262.3px;top:359px;width:1px;background:#5878b0;"></div>
<div class="b" style="left:262.3px;top:376px;width:1px;background:#5878b0;"></div>
<div class="b" style="left:262.3px;top:393px;width:1px;background:#5878b0;"></div>
<div class="b" style="left:277px;top:206px;width:1px;background:#8aa6d8;"></div>
<div class="b" style="left:277px;top:223px;width:1px;background:#8aa6d8;"></div>
<div class="b" style="left:295.2px;top:206px;width:1px;background:#8aa6d8;"></div>
<div class="b" style="left:295.2px;top:223px;width:1px;background:#8aa6d8;"></div>
<div class="b" style="left:295.2px;top:240px;width:1px;background:#8aa6d8;"></div>
<div class="b" style="left:295.2px;top:257px;width:1px;background:#8aa6d8;"></div>
<div class="b" style="left:310.2px;top:206px;width:4.6px;background:#fbc91d;"></div>
<div class="b" style="left:317.8px;top:206px;width:8.8px;background:#c6efee;"></div>
<div class="b" style="left:326.6px;top:206px;width:2.4px;background:#7d8a78;"></div>
<div class="b" style="left:311.2px;top:223px;width:3.6px;background:#fbc91d;"></div>
<div class="b" style="left:320px;top:223px;width:2.6px;background:#fbc91d;"></div>
<div class="b" style="left:323.9px;top:223px;width:1.8px;background:#8d7722;"></div>
<div class="b" style="left:327.6px;top:223px;width:0.8px;background:#6d86c0;"></div>
<div class="b" style="left:331.6px;top:206px;width:5.8px;background:#c6efee;"></div>
<div class="b" style="left:331.6px;top:223px;width:5.8px;background:#c6efee;"></div>
<div class="b" style="left:341px;top:206px;width:4.6px;background:#e9e5d6;"></div>
<div class="b" style="left:341px;top:223px;width:4.6px;background:#e9e5d6;"></div>
<div class="b" style="left:332.3px;top:240px;width:2.7px;background:#fbc91d;"></div>
<div class="b" style="left:341px;top:240px;width:2.8px;background:#fbc91d;"></div>
<div class="b" style="left:325px;top:240px;width:0.8px;background:#6d86c0;"></div>
<div class="b" style="left:325px;top:257px;width:0.8px;background:#6d86c0;"></div>
<div class="b" style="left:334.2px;top:257px;width:0.8px;background:#6d86c0;"></div>
<div class="b" style="left:342.6px;top:257px;width:0.8px;background:#6d86c0;"></div>
<div class="b" style="left:381.2px;top:206px;width:2.8px;background:#8d7722;"></div>
<div class="b" style="left:384px;top:206px;width:4.4px;background:#bfe6fa;"></div>
<div class="b" style="left:388.5px;top:206px;width:2px;background:#7d8a78;"></div>
<div class="b" style="left:384px;top:223px;width:5.3px;background:#bfe6fa;"></div>
<div class="b" style="left:384px;top:240px;width:5.3px;background:#bfe6fa;"></div>
<div class="b" style="left:384px;top:257px;width:5.3px;background:#bfe6fa;"></div>
<div class="b" style="left:384px;top:274px;width:5.3px;background:#bfe6fa;"></div>
<div class="b" style="left:384px;top:291px;width:5.3px;background:#bfe6fa;"></div>
<div class="b" style="left:384px;top:308px;width:2.3px;background:#bfe6fa;"></div>
<div class="b" style="left:386.5px;top:308px;width:2.5px;background:#8d7722;"></div>
<div class="b" style="left:387px;top:325px;width:1px;background:#6d8ec8;"></div>
<div class="b" style="left:387px;top:342px;width:1px;background:#6d8ec8;"></div>
<div class="b" style="left:387px;top:359px;width:1px;background:#6d8ec8;"></div>
<div class="b" style="left:387px;top:376px;width:1px;background:#6d8ec8;"></div>
<div class="b" style="left:387px;top:393px;width:1px;background:#6d8ec8;"></div>
<div class="b" style="left:387px;top:410px;width:1px;background:#6d8ec8;"></div>
<div class="b" style="left:387px;top:427px;width:1px;background:#6d8ec8;"></div>
<div class="b" style="left:395px;top:206px;width:9.6px;background:#bfe6fa;"></div>
<div class="b" style="left:404.6px;top:206px;width:1.4px;background:#8a9a98;"></div>
<div class="b" style="left:395.3px;top:223px;width:10.4px;background:#bfe6fa;"></div>
<div class="b" style="left:397.5px;top:240px;width:8.2px;background:#bfe6fa;"></div>
<div class="b" style="left:397.5px;top:257px;width:8.2px;background:#bfe6fa;"></div>
<div class="b" style="left:397.5px;top:274px;width:8.2px;background:#bfe6fa;"></div>
<div class="b" style="left:397.5px;top:291px;width:8.2px;background:#bfe6fa;"></div>
<div class="b" style="left:397.5px;top:308px;width:8.2px;background:#bfe6fa;"></div>
<div class="b" style="left:397.5px;top:325px;width:8.2px;background:#bfe6fa;"></div>
<div class="b" style="left:397.5px;top:342px;width:8.2px;background:#bfe6fa;"></div>
<div class="b" style="left:397.5px;top:359px;width:8.2px;background:#bfe6fa;"></div>
<div class="b" style="left:397.5px;top:376px;width:8.2px;background:#bfe6fa;"></div>
<div class="b" style="left:397.5px;top:393px;width:8.2px;background:#bfe6fa;"></div>
<div class="b" style="left:401px;top:410px;width:4.5px;background:#bfe6fa;"></div>
<div class="b" style="left:401px;top:427px;width:4.5px;background:#bfe6fa;"></div>
<div class="b" style="left:415px;top:206px;width:4px;background:#7c8478;"></div>
<div class="b" style="left:419.8px;top:206px;width:14.5px;background:#fbc91d;"></div>
<div class="b" style="left:435px;top:206px;width:2px;background:#8d7722;"></div>
<div class="b" style="left:419px;top:223px;width:1.5px;background:#8d7722;"></div>
<div class="b" style="left:423px;top:223px;width:13px;background:#bfe6fa;"></div>
<div class="b" style="left:419px;top:240px;width:1px;background:#8d7722;"></div>
<div class="b" style="left:424.3px;top:240px;width:11.7px;background:#bfe6fa;"></div>
<div class="b" style="left:419px;top:257px;width:1px;background:#5d78a8;"></div>
<div class="b" style="left:424.3px;top:257px;width:5px;background:#bfe6fa;"></div>
<div class="b" style="left:429.9px;top:257px;width:6.1px;background:#bfe6fa;"></div>
<div class="b" style="left:419px;top:274px;width:1px;background:#5d78a8;"></div>
<div class="b" style="left:424.3px;top:274px;width:5px;background:#bfe6fa;"></div>
<div class="b" style="left:429.9px;top:274px;width:2.4px;background:#bfe6fa;"></div>
<div class="b" style="left:432.3px;top:274px;width:3px;background:#8d7722;"></div>
<div class="b" style="left:424px;top:291px;width:7.7px;background:#bfe6fa;"></div>
<div class="b" style="left:432px;top:291px;width:2px;background:#8d7722;"></div>
<div class="b" style="left:424px;top:308px;width:2.2px;background:#bfe6fa;"></div>
<div class="b" style="left:426.3px;top:308px;width:2.2px;background:#8d7722;"></div>
<div class="b" style="left:428.5px;top:308px;width:3.2px;background:#fbc91d;"></div>
<div class="b" style="left:429.6px;top:325px;width:2.1px;background:#bfe6fa;"></div>
<div class="b" style="left:429.6px;top:342px;width:2.1px;background:#bfe6fa;"></div>
<div class="b" style="left:431px;top:359px;width:1px;background:#8d7722;"></div>
<div class="b" style="left:432px;top:376px;width:1px;background:#6d8ec8;"></div>
<div class="b" style="left:432px;top:393px;width:1px;background:#6d8ec8;"></div>
<div class="b" style="left:432px;top:410px;width:1px;background:#6d8ec8;"></div>
<div class="b" style="left:432px;top:427px;width:1px;background:#6d8ec8;"></div>
<div class="b" style="left:439.6px;top:206px;width:1.4px;background:#8d7722;"></div>
<div class="b" style="left:440px;top:223px;width:1px;background:#6d8ec8;"></div>
<div class="b" style="left:440px;top:240px;width:1px;background:#6d8ec8;"></div>
<div class="b" style="left:440px;top:257px;width:1px;background:#6d8ec8;"></div>
<div class="b" style="left:440px;top:274px;width:1px;background:#6d8ec8;"></div>
<div class="b" style="left:440px;top:291px;width:1px;background:#6d8ec8;"></div>
<div class="b" style="left:440px;top:308px;width:1px;background:#6d8ec8;"></div>
<div class="b" style="left:440px;top:325px;width:1px;background:#6d8ec8;"></div>
<div class="b" style="left:440px;top:342px;width:1px;background:#6d8ec8;"></div>
<div class="b" style="left:440px;top:359px;width:1px;background:#6d8ec8;"></div>
<div class="b" style="left:443.6px;top:206px;width:3.4px;background:#bfe6fa;"></div>
<div class="b" style="left:443.6px;top:223px;width:3.4px;background:#bfe6fa;"></div>
<div class="b" style="left:443.6px;top:240px;width:3.4px;background:#bfe6fa;"></div>
<div class="b" style="left:443.6px;top:257px;width:3.4px;background:#bfe6fa;"></div>
<div class="b" style="left:443.6px;top:274px;width:3.4px;background:#bfe6fa;"></div>
<div class="b" style="left:443.6px;top:291px;width:3.4px;background:#bfe6fa;"></div>
<div class="b" style="left:443.6px;top:308px;width:3.4px;background:#bfe6fa;"></div>
<div class="b" style="left:443.6px;top:325px;width:3.4px;background:#bfe6fa;"></div>
<div class="b" style="left:443.6px;top:342px;width:3.4px;background:#bfe6fa;"></div>
<div class="b" style="left:443.6px;top:359px;width:3.4px;background:#bfe6fa;"></div>
<div class="b" style="left:443.6px;top:376px;width:3.4px;background:#bfe6fa;"></div>
<div class="b" style="left:443.6px;top:393px;width:3.4px;background:#bfe6fa;"></div>
<div class="b" style="left:443.6px;top:410px;width:3.4px;background:#bfe6fa;"></div>
<div class="b" style="left:443.6px;top:427px;width:3.4px;background:#bfe6fa;"></div>
<div class="b" style="left:454px;top:189px;width:1px;background:#44619a;"></div>
<div class="b" style="left:498px;top:206px;width:2px;background:#8d7722;"></div>
<div class="b" style="left:498px;top:223px;width:1px;background:#6d8ec8;"></div>
<div class="b" style="left:501px;top:206px;width:23px;background:#bfe6fa;"></div>
<div class="b" style="left:501px;top:223px;width:23px;background:#bfe6fa;"></div>
<div class="b" style="left:501px;top:240px;width:23px;background:#bfe6fa;"></div>
<div class="b" style="left:501px;top:257px;width:23px;background:#bfe6fa;"></div>
<div class="b" style="left:501px;top:274px;width:23px;background:#bfe6fa;"><span style="left:5px;color:#2b2b2b">r...</span></div>
<div class="b" style="left:501px;top:291px;width:23px;background:#bfe6fa;"></div>
<div class="b" style="left:501px;top:308px;width:23px;background:#bfe6fa;"></div>
<div class="b" style="left:501px;top:325px;width:23px;background:#bfe6fa;"><span style="left:5px;color:#2b2b2b">l...</span></div>
<div class="b" style="left:501px;top:342px;width:23px;background:#bfe6fa;"></div>
<div class="b" style="left:501px;top:359px;width:23px;background:#bfe6fa;"></div>
<div class="b" style="left:501px;top:376px;width:23px;background:#bfe6fa;"><span style="left:5px;color:#2b2b2b">l...</span></div>
<div class="b" style="left:501px;top:393px;width:23px;background:#bfe6fa;"></div>
<div class="b" style="left:501px;top:410px;width:23px;background:#bfe6fa;"></div>
<div class="b" style="left:501px;top:427px;width:23px;background:#bfe6fa;"></div>
<div class="b" style="left:548px;top:206px;width:1px;background:#55719f;"></div>
<div class="b" style="left:548px;top:223px;width:1px;background:#55719f;"></div>
<div class="b" style="left:548px;top:240px;width:1px;background:#55719f;"></div>
<div class="b" style="left:548px;top:257px;width:1px;background:#55719f;"></div>
<div class="b" style="left:548px;top:274px;width:1px;background:#55719f;"></div>
<div class="b" style="left:548px;top:291px;width:1px;background:#55719f;"></div>
<div class="b" style="left:548px;top:308px;width:1px;background:#55719f;"></div>
<div class="b" style="left:741.7px;top:206px;width:1.3px;background:#8d7722;"></div>
<div class="b" style="left:743px;top:206px;width:3px;background:#e0b71e;"></div>
<div class="b" style="left:823px;top:206px;width:3px;background:#b4d6f6;"></div>
<div class="b" style="left:822.9px;top:223px;width:2.9px;background:#b0d2f6;"></div>
<div class="b" style="left:822.9px;top:240px;width:2.9px;background:#b0d2f6;"></div>
<div class="b" style="left:822.9px;top:257px;width:2.9px;background:#b0d2f6;"></div>
<div class="b" style="left:822.9px;top:274px;width:2.9px;background:#b0d2f6;"></div>
<div class="b" style="left:822.9px;top:291px;width:2.9px;background:#b0d2f6;"></div>
<div class="b" style="left:822.9px;top:308px;width:2.9px;background:#b0d2f6;"></div>
<div class="b" style="left:822.9px;top:325px;width:2.9px;background:#b0d2f6;"></div>
<div class="b" style="left:822.9px;top:342px;width:2.9px;background:#b0d2f6;"></div>
<div class="b" style="left:822.9px;top:359px;width:2.9px;background:#b0d2f6;"></div>
<div class="b" style="left:822.9px;top:376px;width:2.9px;background:#b0d2f6;"></div>
<div class="b" style="left:822.9px;top:393px;width:2.9px;background:#b0d2f6;"></div>
<div class="b" style="left:822.9px;top:410px;width:2.9px;background:#b0d2f6;"></div>
<div class="b" style="left:822.9px;top:427px;width:2.9px;background:#b0d2f6;"></div>
<div class="b" style="left:822px;top:206px;width:1px;background:#6d8ec8;"></div>
<div class="b" style="left:870px;top:206px;width:1px;background:#5d78a8;"></div>
<div class="b" style="left:870px;top:223px;width:1px;background:#8d7722;"></div>
<div class="b" style="left:885px;top:206px;width:2.5px;background:#8d7722;"></div>
<div class="b" style="left:888px;top:206px;width:26.5px;background:#bfe6fa;"><span style="left:8px;color:#2b2b2b">i...</span></div>
<div class="b" style="left:915px;top:206px;width:113.8px;background:#bfe6fa;"><span style="left:5.5px;color:#2b2b2b">init</span></div>
<div class="b" style="left:885px;top:223px;width:1px;background:#8d7722;"></div>
<div class="b" style="left:889px;top:223px;width:25.5px;background:#bfe6fa;"><span style="left:7px;color:#2b2b2b">i...t</span></div>
<div class="b" style="left:915px;top:223px;width:113.8px;background:#bfe6fa;"><span style="left:5.5px;color:#2b2b2b">onDOMReady</span></div>
<div class="b" style="left:890px;top:240px;width:2px;background:#bfe6fa;"></div>
<div class="b" style="left:893px;top:240px;width:21.5px;background:#bfe6fa;"><span style="left:6px;color:#2b2b2b">i...</span></div>
<div class="b" style="left:915px;top:240px;width:113.8px;background:#bfe6fa;"><span style="left:5.5px;color:#2b2b2b">(anonymous)</span></div>
<div class="b" style="left:890px;top:257px;width:2px;background:#bfe6fa;"></div>
<div class="b" style="left:893px;top:257px;width:21.5px;background:#bfe6fa;"><span style="left:6px;color:#2b2b2b">i...</span></div>
<div class="b" style="left:915px;top:257px;width:4px;background:#bfe6fa;"></div>
<div class="b" style="left:920px;top:257px;width:9.5px;background:#bfe6fa;"></div>
<div class="b" style="left:930px;top:257px;width:98.8px;background:#bfe6fa;"><span style="left:6px;color:#2b2b2b">addGlob...stener</span></div>
<div class="b" style="left:889px;top:274px;width:3.9px;background:#8d7722;"></div>
<div class="b" style="left:893.4px;top:274px;width:2.1px;background:#bfe6fa;"></div>
<div class="b" style="left:896px;top:274px;width:3.3px;background:#bfe6fa;"></div>
<div class="b" style="left:900px;top:274px;width:4.4px;background:#bfe6fa;"></div>
<div class="b" style="left:905px;top:274px;width:9.5px;background:#bfe6fa;"></div>
<div class="b" style="left:915.8px;top:274px;width:2.9px;background:#8d7722;"></div>
<div class="b" style="left:920.4px;top:274px;width:9.6px;background:#bfe6fa;"></div>
<div class="b" style="left:930.4px;top:274px;width:2.4px;background:#8d7722;"></div>
<div class="b" style="left:933px;top:274px;width:1.3px;background:#bfe6fa;"></div>
<div class="b" style="left:935px;top:274px;width:93.8px;background:#bfe6fa;"><span style="left:5.5px;color:#2b2b2b">init</span></div>
<div class="b" style="left:891.2px;top:291px;width:0.8px;background:#bfe6fa;"></div>
<div class="b" style="left:893.1px;top:291px;width:2.9px;background:#bfe6fa;"></div>
<div class="b" style="left:896px;top:291px;width:3.7px;background:#8d7722;"></div>
<div class="b" style="left:899.9px;top:291px;width:4.3px;background:#bfe6fa;"></div>
<div class="b" style="left:905px;top:291px;width:9.8px;background:#bfe6fa;"></div>
<div class="b" style="left:918px;top:291px;width:1px;background:#bfe6fa;"></div>
<div class="b" style="left:924.6px;top:291px;width:1.4px;background:#8d7722;"></div>
<div class="b" style="left:926px;top:291px;width:4.5px;background:#fbc91d;"></div>
<div class="b" style="left:933px;top:291px;width:1.3px;background:#bfe6fa;"></div>
<div class="b" style="left:935px;top:291px;width:93.8px;background:#bfe6fa;"><span style="left:5.5px;color:#2b2b2b">onDOMReady</span></div>
<div class="b" style="left:892.8px;top:308px;width:3.2px;background:#8d7722;"></div>
<div class="b" style="left:898.1px;top:308px;width:0.9px;background:#bfe6fa;"></div>
<div class="b" style="left:899.9px;top:308px;width:4.3px;background:#bfe6fa;"></div>
<div class="b" style="left:905px;top:308px;width:9.8px;background:#bfe6fa;"></div>
<div class="b" style="left:927.9px;top:308px;width:1.1px;background:#8d7722;"></div>
<div class="b" style="left:930px;top:308px;width:1px;background:#8d7722;"></div>
<div class="b" style="left:933px;top:308px;width:1.3px;background:#bfe6fa;"></div>
<div class="b" style="left:935px;top:308px;width:93.8px;background:#bfe6fa;"><span style="left:6px;color:#2b2b2b">(anonymous)</span></div>
<div class="b" style="left:898.7px;top:325px;width:0.7px;background:#bfe6fa;"></div>
<div class="b" style="left:899.9px;top:325px;width:4.7px;background:#bfe6fa;"></div>
<div class="b" style="left:905.4px;top:325px;width:9.2px;background:#bfe6fa;"></div>
<div class="b" style="left:933.2px;top:325px;width:2.1px;background:#bfe6fa;"></div>
<div class="b" style="left:898.7px;top:342px;width:0.7px;background:#bfe6fa;"></div>
<div class="b" style="left:899.9px;top:342px;width:4.7px;background:#bfe6fa;"></div>
<div class="b" style="left:905.4px;top:342px;width:9.2px;background:#bfe6fa;"></div>
<div class="b" style="left:933.2px;top:342px;width:2.1px;background:#bfe6fa;"></div>
<div class="b" style="left:898.7px;top:359px;width:0.7px;background:#bfe6fa;"></div>
<div class="b" style="left:899.9px;top:359px;width:4.7px;background:#bfe6fa;"></div>
<div class="b" style="left:905.4px;top:359px;width:9.2px;background:#bfe6fa;"></div>
<div class="b" style="left:933.2px;top:359px;width:2.1px;background:#bfe6fa;"></div>
<div class="b" style="left:936px;top:325px;width:2.4px;background:#8d7722;"></div>
<div class="b" style="left:938.8px;top:325px;width:90px;background:#bfe6fa;"><span style="left:5.7px;color:#2b2b2b">checkI...kPage</span></div>
<div class="b" style="left:936px;top:342px;width:2.4px;background:#bfe6fa;"></div>
<div class="b" style="left:936px;top:359px;width:2.4px;background:#bfe6fa;"></div>
<div class="b" style="left:939px;top:342px;width:69.4px;background:#bfe6fa;"><span style="left:5.5px;color:#2b2b2b">getContext</span></div>
<div class="b" style="left:1009px;top:342px;width:19.8px;background:#bfe6fa;"></div>
<div class="b" style="left:939px;top:359px;width:69.4px;background:#bfe6fa;"><span style="left:5.5px;color:#2b2b2b">(ano...ous)</span></div>
<div class="b" style="left:1009px;top:359px;width:6.6px;background:#bfe6fa;"></div>
<div class="b" style="left:1017.8px;top:359px;width:11px;background:#bfe6fa;"></div>
<div class="b" style="left:898.2px;top:376px;width:0.8px;background:#bfe6fa;"></div>
<div class="b" style="left:899.7px;top:376px;width:5.1px;background:#bfe6fa;"></div>
<div class="b" style="left:906.7px;top:376px;width:8.3px;background:#8d7722;"></div>
<div class="b" style="left:910.6px;top:376px;width:0.6px;background:#fbc91d;"></div>
<div class="b" style="left:933.2px;top:376px;width:2.9px;background:#bfe6fa;"></div>
<div class="b" style="left:938.9px;top:376px;width:1.9px;background:#8d7722;"></div>
<div class="b" style="left:940.8px;top:376px;width:14px;background:#bfe6fa;"></div>
<div class="b" style="left:955.8px;top:376px;width:1.6px;background:#8d7722;"></div>
<div class="b" style="left:957.9px;top:376px;width:27.9px;background:#bfe6fa;"><span style="left:6px;color:#2b2b2b">c...</span></div>
<div class="b" style="left:988px;top:376px;width:20.6px;background:#bfe6fa;"></div>
<div class="b" style="left:1020.5px;top:376px;width:8.3px;background:#8d7722;"></div>
<div class="b" style="left:898.2px;top:393px;width:0.8px;background:#bfe6fa;"></div>
<div class="b" style="left:899.7px;top:393px;width:5.1px;background:#bfe6fa;"></div>
<div class="b" style="left:910.7px;top:393px;width:1px;background:#bfe6fa;"></div>
<div class="b" style="left:933.2px;top:393px;width:2.9px;background:#8d7722;"></div>
<div class="b" style="left:940.8px;top:393px;width:14px;background:#bfe6fa;"></div>
<div class="b" style="left:957.9px;top:393px;width:27.9px;background:#bfe6fa;"><span style="left:6px;color:#2b2b2b">(...)</span></div>
<div class="b" style="left:988px;top:393px;width:20.6px;background:#bfe6fa;"></div>
<div class="b" style="left:1026.2px;top:393px;width:0.8px;background:#bfe6fa;"></div>
<div class="b" style="left:1028.2px;top:393px;width:0.8px;background:#bfe6fa;"></div>
<div class="b" style="left:898.2px;top:410px;width:0.8px;background:#bfe6fa;"></div>
<div class="b" style="left:899.7px;top:410px;width:5.1px;background:#bfe6fa;"></div>
<div class="b" style="left:910.7px;top:410px;width:1px;background:#bfe6fa;"></div>
<div class="b" style="left:935px;top:410px;width:1px;background:#8d7722;"></div>
<div class="b" style="left:943.7px;top:410px;width:3px;background:#bfe6fa;"></div>
<div class="b" style="left:960.1px;top:410px;width:2.9px;background:#bfe6fa;"></div>
<div class="b" style="left:966px;top:410px;width:3px;background:#bfe6fa;"></div>
<div class="b" style="left:982.9px;top:410px;width:2.9px;background:#bfe6fa;"></div>
<div class="b" style="left:1026.2px;top:410px;width:0.8px;background:#bfe6fa;"></div>
<div class="b" style="left:1029px;top:410px;width:1px;background:#8d7722;"></div>
<div class="b" style="left:898.2px;top:427px;width:0.8px;background:#bfe6fa;"></div>
<div class="b" style="left:899.7px;top:427px;width:5.1px;background:#bfe6fa;"></div>
<div class="b" style="left:910.7px;top:427px;width:1px;background:#bfe6fa;"></div>
<div class="b" style="left:1026.2px;top:427px;width:0.8px;background:#bfe6fa;"></div>
<div class="b" style="left:1032.6px;top:223px;width:1px;background:#a9c8f0;"></div>
<div class="b" style="left:1032.6px;top:240px;width:1px;background:#a9c8f0;"></div>
<div class="b" style="left:1032.6px;top:257px;width:1px;background:#a9c8f0;"></div>
<div class="b" style="left:1032.6px;top:274px;width:1px;background:#a9c8f0;"></div>
<div class="b" style="left:1032.6px;top:291px;width:1px;background:#a9c8f0;"></div>
<div class="b" style="left:1032.6px;top:308px;width:1px;background:#a9c8f0;"></div>
<div class="b" style="left:1032.6px;top:325px;width:1px;background:#a9c8f0;"></div>
<div class="b" style="left:1032.6px;top:342px;width:1px;background:#a9c8f0;"></div>
<div class="b" style="left:1032.6px;top:359px;width:1px;background:#a9c8f0;"></div>
<div class="b" style="left:1032.6px;top:376px;width:1px;background:#a9c8f0;"></div>
<div class="b" style="left:1032.6px;top:393px;width:1px;background:#a9c8f0;"></div>
<div class="b" style="left:1032.6px;top:410px;width:1px;background:#a9c8f0;"></div>
<div class="b" style="left:1032.6px;top:427px;width:1px;background:#a9c8f0;"></div>
<div class="b" style="left:1030.8px;top:206px;width:2.7px;background:#88927a;"></div>
<div class="b" style="left:1035.8px;top:206px;width:7.6px;background:#bfe6fa;"></div>
<div class="b" style="left:1035.8px;top:223px;width:7.6px;background:#bfe6fa;"></div>
<div class="b" style="left:1035.8px;top:240px;width:7px;background:#bfe6fa;"></div>
<div class="b" style="left:1035.8px;top:257px;width:7px;background:#bfe6fa;"></div>
<div class="b" style="left:1035.8px;top:274px;width:7px;background:#bfe6fa;"></div>
<div class="b" style="left:1035.8px;top:291px;width:7px;background:#bfe6fa;"></div>
<div class="b" style="left:1035.8px;top:308px;width:7px;background:#bfe6fa;"></div>
<div class="b" style="left:1035.8px;top:325px;width:7px;background:#bfe6fa;"></div>
<div class="b" style="left:1035.8px;top:342px;width:7px;background:#bfe6fa;"></div>
<div class="b" style="left:1035.8px;top:359px;width:7px;background:#bfe6fa;"></div>
<div class="b" style="left:1035.8px;top:376px;width:7px;background:#bfe6fa;"></div>
<div class="b" style="left:1035.8px;top:393px;width:7px;background:#bfe6fa;"></div>
<div class="b" style="left:1035.8px;top:410px;width:7px;background:#bfe6fa;"></div>
<div class="b" style="left:1035.8px;top:427px;width:7px;background:#bfe6fa;"></div>
<div class="b" style="left:1045.6px;top:206px;width:17.9px;background:#fbc91d;"></div>
<div class="b" style="left:1045.2px;top:223px;width:5.5px;background:#fbc91d;"></div>
<div class="b" style="left:1052.9px;top:223px;width:10.6px;background:#bfe6fa;"></div>
<div class="b" style="left:1048px;top:240px;width:0.8px;background:#7d93c0;"></div>
<div class="b" style="left:1050.3px;top:240px;width:0.7px;background:#7d93c0;"></div>
<div class="b" style="left:1052.9px;top:240px;width:10.6px;background:#bfe6fa;"></div>
<div class="b" style="left:1042.6px;top:257px;width:2.2px;background:#8d7722;"></div>
<div class="b" style="left:1050.3px;top:257px;width:0.7px;background:#7d93c0;"></div>
<div class="b" style="left:1052.9px;top:257px;width:3.6px;background:#bfe6fa;"></div>
<div class="b" style="left:1057.1px;top:257px;width:2.8px;background:#b8961f;"></div>
<div class="b" style="left:1059.9px;top:257px;width:3.6px;background:#bfe6fa;"></div>
<div class="b" style="left:1058.2px;top:274px;width:0.8px;background:#dfeefa;"></div>
<div class="b" style="left:1060.2px;top:274px;width:3.5px;background:#bfe6fa;"></div>
<div class="b" style="left:1060.2px;top:291px;width:3.7px;background:#bfe6fa;"></div>
<div class="b" style="left:1059.9px;top:308px;width:5.1px;background:#8d7722;"></div>
<div class="b" style="left:1060.8px;top:325px;width:0.9px;background:#8d7722;"></div>
<div class="b" style="left:1068.7px;top:206px;width:3.1px;background:#87885e;"></div>
<div class="b" style="left:1079.1px;top:206px;width:20.2px;background:#bfe6fa;"></div>
<div class="b" style="left:1079.1px;top:223px;width:20.2px;background:#bfe6fa;"></div>
<div class="b" style="left:1079.1px;top:240px;width:20.2px;background:#bfe6fa;"></div>
<div class="b" style="left:1079.1px;top:257px;width:20.2px;background:#bfe6fa;"></div>
<div class="b" style="left:1079.1px;top:274px;width:20.2px;background:#bfe6fa;"></div>
<div class="b" style="left:1079.1px;top:291px;width:20.2px;background:#bfe6fa;"></div>
<div class="b" style="left:1079.1px;top:308px;width:20.2px;background:#bfe6fa;"></div>
<div class="b" style="left:1079.1px;top:325px;width:20.2px;background:#bfe6fa;"></div>
<div class="b" style="left:1079.1px;top:342px;width:20.2px;background:#bfe6fa;"></div>
<div class="b" style="left:1079.1px;top:359px;width:20.2px;background:#bfe6fa;"></div>
<div class="b" style="left:1079.1px;top:376px;width:20.2px;background:#bfe6fa;"></div>
<div class="b" style="left:1079.1px;top:393px;width:20.2px;background:#bfe6fa;"></div>
<div class="b" style="left:1079.1px;top:410px;width:20.2px;background:#bfe6fa;"></div>
<div class="b" style="left:1079.1px;top:427px;width:20.2px;background:#bfe6fa;"></div>
<div class="b" style="left:1104px;top:206px;width:1px;background:#8d7722;"></div>
<div class="b" style="left:1104.9px;top:206px;width:7.8px;background:#bfe6fa;"></div>
<div class="b" style="left:1104.9px;top:223px;width:7.8px;background:#bfe6fa;"></div>
<div class="b" style="left:1104.9px;top:240px;width:7.8px;background:#bfe6fa;"></div>
<div class="b" style="left:1104.9px;top:257px;width:7.8px;background:#bfe6fa;"></div>
<div class="b" style="left:1104.9px;top:274px;width:7.8px;background:#bfe6fa;"></div>
<div class="b" style="left:1104.9px;top:291px;width:7.8px;background:#bfe6fa;"></div>
<div class="b" style="left:1104.9px;top:308px;width:7.8px;background:#bfe6fa;"></div>
<div class="b" style="left:1104.9px;top:325px;width:7.8px;background:#bfe6fa;"></div>
<div class="b" style="left:1104.9px;top:342px;width:7.8px;background:#bfe6fa;"></div>
<div class="b" style="left:1104.9px;top:359px;width:7.8px;background:#bfe6fa;"></div>
<div class="b" style="left:1104.9px;top:376px;width:7.8px;background:#bfe6fa;"></div>
<div class="b" style="left:1104.9px;top:393px;width:7.8px;background:#bfe6fa;"></div>
<div class="b" style="left:1104.9px;top:410px;width:7.8px;background:#bfe6fa;"></div>
<div class="b" style="left:1104.9px;top:427px;width:7.8px;background:#bfe6fa;"></div>
<div class="b" style="left:1122.2px;top:206px;width:1px;background:#8fb2e6;"></div>
<div class="b" style="left:1122.2px;top:223px;width:1px;background:#8fb2e6;"></div>
<div class="b" style="left:1122.2px;top:240px;width:1px;background:#8fb2e6;"></div>
<div class="b" style="left:1122.2px;top:257px;width:1px;background:#8fb2e6;"></div>
<div class="b" style="left:1122.2px;top:274px;width:1px;background:#8fb2e6;"></div>
<div class="b" style="left:1122.2px;top:291px;width:1px;background:#8fb2e6;"></div>
<div class="b" style="left:1122.2px;top:308px;width:1px;background:#8fb2e6;"></div>
<div class="b" style="left:1122.2px;top:325px;width:1px;background:#8fb2e6;"></div>
<div class="b" style="left:1122.2px;top:342px;width:1px;background:#8fb2e6;"></div>
<div class="b" style="left:1122.2px;top:359px;width:1px;background:#8fb2e6;"></div>
<div class="b" style="left:1122.2px;top:376px;width:1px;background:#8fb2e6;"></div>
<div class="b" style="left:1122.2px;top:393px;width:1px;background:#8fb2e6;"></div>
<div class="b" style="left:1122.2px;top:410px;width:1px;background:#8fb2e6;"></div>
<div class="b" style="left:1122.2px;top:427px;width:1px;background:#8fb2e6;"></div>
<div class="b" style="left:1147px;top:206px;width:1.8px;background:#b3d6f6;"></div>
<div class="b" style="left:1147px;top:223px;width:1.8px;background:#b3d6f6;"></div>
<div class="b" style="left:1147px;top:240px;width:1.8px;background:#b3d6f6;"></div>
<div class="b" style="left:1147px;top:257px;width:1.8px;background:#b3d6f6;"></div>
<div class="b" style="left:1147px;top:274px;width:1.8px;background:#b3d6f6;"></div>
<div class="b" style="left:1147px;top:291px;width:1.8px;background:#b3d6f6;"></div>
<div class="b" style="left:1147px;top:308px;width:1.8px;background:#b3d6f6;"></div>
<div class="b" style="left:1147px;top:325px;width:1.8px;background:#b3d6f6;"></div>
<div class="b" style="left:1147px;top:342px;width:1.8px;background:#b3d6f6;"></div>
<div class="b" style="left:1147px;top:359px;width:1.8px;background:#b3d6f6;"></div>
<div class="b" style="left:1147px;top:376px;width:1.8px;background:#b3d6f6;"></div>
<div class="b" style="left:1147px;top:393px;width:1.8px;background:#b3d6f6;"></div>
<div class="b" style="left:1147px;top:410px;width:1.8px;background:#b3d6f6;"></div>
<div class="b" style="left:1147px;top:427px;width:1.8px;background:#b3d6f6;"></div>
<div class="b" style="left:1176.2px;top:206px;width:3.5px;background:#bfe6fa;"></div>
<div class="b" style="left:1176.2px;top:223px;width:3.5px;background:#bfe6fa;"></div>
<div class="b" style="left:1176.2px;top:240px;width:3.5px;background:#bfe6fa;"></div>
<div class="b" style="left:1176.2px;top:257px;width:3.5px;background:#bfe6fa;"></div>
<div class="b" style="left:1176.2px;top:274px;width:3.5px;background:#bfe6fa;"></div>
<div class="b" style="left:1176.2px;top:291px;width:3.5px;background:#bfe6fa;"></div>
<div class="b" style="left:1176.2px;top:308px;width:3.5px;background:#bfe6fa;"></div>
<div class="b" style="left:1176.2px;top:325px;width:3.5px;background:#bfe6fa;"></div>
<div class="b" style="left:1176.2px;top:342px;width:3.5px;background:#bfe6fa;"></div>
<div class="b" style="left:1176.2px;top:359px;width:3.5px;background:#bfe6fa;"></div>
<div class="b" style="left:1176.2px;top:376px;width:3.5px;background:#bfe6fa;"></div>
<div class="b" style="left:1176.2px;top:393px;width:3.5px;background:#bfe6fa;"></div>
<div class="b" style="left:1176.2px;top:410px;width:3.5px;background:#bfe6fa;"></div>
<div class="b" style="left:1176.2px;top:427px;width:3.5px;background:#bfe6fa;"></div>
<div class="b" style="left:1238px;top:206px;width:260.8px;background:#bfe6fa;"><span style="left:5.5px;color:#2b2b2b">getRenderRoot</span></div>
<div class="b" style="left:1499.6px;top:206px;width:22.5px;background:#bfe6fa;"><span style="left:6px;color:#2b2b2b">i...</span></div>
<div class="b" style="left:1522.9px;top:206px;width:23.1px;background:#bfe6fa;"></div>
<div class="b" style="left:1238.4px;top:223px;width:1.6px;background:#fbc91d;"></div>
<div class="b" style="left:1240px;top:223px;width:3.5px;background:#8d7722;"></div>
<div class="b" style="left:1243.5px;top:223px;width:9px;background:#bfe6fa;"></div>
<div class="b" style="left:1240.3px;top:240px;width:0.8px;background:#8fb2e0;"></div>
<div class="b" style="left:1243px;top:240px;width:3px;background:#bfe6fa;"></div>
<div class="b" style="left:1246.6px;top:240px;width:5.9px;background:#bfe6fa;"></div>
<div class="b" style="left:1243px;top:257px;width:2.3px;background:#8d7722;"></div>
<div class="b" style="left:1246.6px;top:257px;width:5.9px;background:#bfe6fa;"></div>
<div class="b" style="left:1244.6px;top:274px;width:1.4px;background:#bfe6fa;"></div>
<div class="b" style="left:1246.6px;top:274px;width:5.9px;background:#bfe6fa;"></div>
<div class="b" style="left:1245.3px;top:291px;width:7.2px;background:#bfe6fa;"></div>
<div class="b" style="left:1246px;top:308px;width:1.2px;background:#c9a21e;"></div>
<div class="b" style="left:1247.2px;top:308px;width:5.3px;background:#fbc91d;"></div>
<div class="b" style="left:1249.5px;top:325px;width:3.9px;background:#8a7650;"></div>
<div class="b" style="left:1498.8px;top:223px;width:14.5px;background:#8d7722;"></div>
<div class="b" style="left:1514px;top:223px;width:5.7px;background:#8d7722;"></div>
<div class="b" style="left:1514.2px;top:223px;width:0.8px;background:#fbc91d;"></div>
<div class="b" style="left:1519.7px;top:223px;width:1.6px;background:#fbc91d;"></div>
<div class="b" style="left:1521.3px;top:223px;width:1.6px;background:#b8961f;"></div>
<div class="b" style="left:1522.9px;top:223px;width:11.2px;background:#bfe6fa;"></div>
<div class="b" style="left:1534.8px;top:223px;width:3.1px;background:#bfe6fa;"></div>
<div class="b" style="left:1538.6px;top:223px;width:4px;background:#bfe6fa;"></div>
<div class="b" style="left:1543.3px;top:223px;width:2.7px;background:#bfe6fa;"></div>
<div class="b" style="left:1502px;top:240px;width:0.9px;background:#8fb2e0;"></div>
<div class="b" style="left:1505.2px;top:240px;width:0.9px;background:#8fb2e0;"></div>
<div class="b" style="left:1507.3px;top:240px;width:0.9px;background:#8fb2e0;"></div>
<div class="b" style="left:1512.5px;top:240px;width:0.9px;background:#8fb2e0;"></div>
<div class="b" style="left:1518.2px;top:240px;width:0.9px;background:#8fb2e0;"></div>
<div class="b" style="left:1522.9px;top:240px;width:6.4px;background:#bfe6fa;"></div>
<div class="b" style="left:1530px;top:240px;width:4.2px;background:#bfe6fa;"></div>
<div class="b" style="left:1534.9px;top:240px;width:3.3px;background:#bfe6fa;"></div>
<div class="b" style="left:1538.9px;top:240px;width:2.6px;background:#bfe6fa;"></div>
<div class="b" style="left:1502px;top:257px;width:0.9px;background:#8fb2e0;"></div>
<div class="b" style="left:1505.2px;top:257px;width:0.9px;background:#8fb2e0;"></div>
<div class="b" style="left:1507.3px;top:257px;width:0.9px;background:#8fb2e0;"></div>
<div class="b" style="left:1512.5px;top:257px;width:0.9px;background:#8fb2e0;"></div>
<div class="b" style="left:1518.2px;top:257px;width:0.9px;background:#8fb2e0;"></div>
<div class="b" style="left:1522.9px;top:257px;width:6.4px;background:#bfe6fa;"></div>
<div class="b" style="left:1530px;top:257px;width:4.2px;background:#bfe6fa;"></div>
<div class="b" style="left:1534.9px;top:257px;width:3.3px;background:#bfe6fa;"></div>
<div class="b" style="left:1538.9px;top:257px;width:2.6px;background:#bfe6fa;"></div>
<div class="b" style="left:1541.5px;top:240px;width:4.5px;background:#8d7722;"></div>
<div class="b" style="left:1507.3px;top:274px;width:0.9px;background:#8fb2e0;"></div>
<div class="b" style="left:1518.4px;top:274px;width:0.9px;background:#8fb2e0;"></div>
<div class="b" style="left:1524px;top:274px;width:5.3px;background:#8d7722;"></div>
<div class="b" style="left:1530px;top:274px;width:4.4px;background:#bfe6fa;"></div>
<div class="b" style="left:1535px;top:274px;width:3.5px;background:#bfe6fa;"></div>
<div class="b" style="left:1541px;top:274px;width:1px;background:#8d7722;"></div>
<div class="b" style="left:1507.3px;top:291px;width:0.9px;background:#8fb2e0;"></div>
<div class="b" style="left:1518px;top:291px;width:1.2px;background:#8d7722;"></div>
<div class="b" style="left:1530.1px;top:291px;width:4.3px;background:#bfe6fa;"></div>
<div class="b" style="left:1535px;top:291px;width:3.5px;background:#bfe6fa;"></div>
<div class="b" style="left:1507.3px;top:308px;width:0.9px;background:#8fb2e0;"></div>
<div class="b" style="left:1530.1px;top:308px;width:4.4px;background:#bfe6fa;"></div>
<div class="b" style="left:1535.7px;top:308px;width:2.5px;background:#8d7722;"></div>
<div class="b" style="left:1530.1px;top:325px;width:4.4px;background:#bfe6fa;"></div>
<div class="b" style="left:1530.1px;top:342px;width:4.4px;background:#bfe6fa;"></div>
<div class="b" style="left:1530.1px;top:359px;width:4.4px;background:#bfe6fa;"></div>
<div class="b" style="left:1530.1px;top:376px;width:4.4px;background:#8d7722;"></div>
<div style="position:absolute;left:436px;top:150px;width:0;height:286px;border-left:1px dashed rgba(200,40,40,0.45)"></div>
<div style="position:absolute;left:436px;top:139px;width:15px;height:11.4px;background:#cb191c;color:#fff;font-size:9.5px;font-weight:bold;line-height:8.5px;text-align:center;overflow:hidden">L</div>
<div id="wm">掘金技术社区</div><div id="wm2">@ XYYX</div>
</body></html>
